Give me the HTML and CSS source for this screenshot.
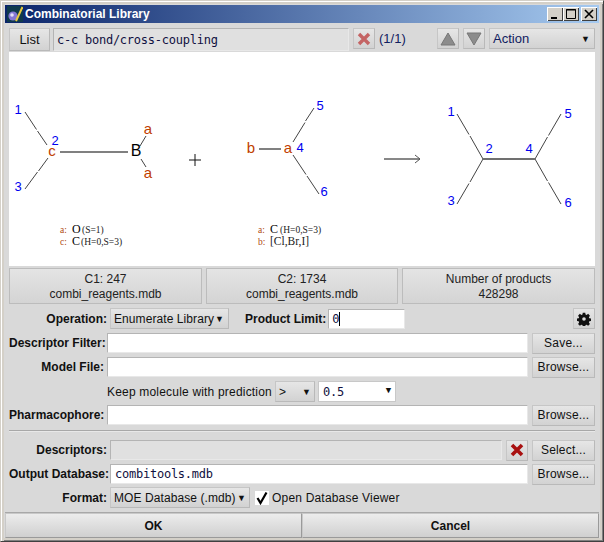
FILE: index.html
```html
<!DOCTYPE html>
<html lang="en">
<head>
<meta charset="utf-8">
<title>Combinatorial Library</title>
<link rel="stylesheet" href="styles.css">
</head>
<body>
<div class="window">
  <header class="titlebar">
    <svg class="app-icon" width="16" height="16" viewBox="0 0 16 16">
      <rect width="16" height="16" fill="#0f3a4c"/>
      <circle cx="6" cy="10" r="4.6" fill="#8577d2"/>
      <circle cx="5" cy="9" r="1.8" fill="#e4e0f8"/>
      <path d="M9 15 L15.5 1" stroke="#e8c840" stroke-width="2"/>
    </svg>
    <span class="title">Combinatorial Library</span>
    <div class="win-controls">
      <span class="win-btn"><svg width="16" height="14" viewBox="0 0 16 14"><rect x="4" y="10" width="6" height="2" fill="#000"/></svg></span>
      <span class="win-btn"><svg width="16" height="14" viewBox="0 0 16 14"><path d="M3.5 2.5h9v9h-9z M3 3h10" fill="none" stroke="#000"/></svg></span>
      <span class="win-btn close"><svg width="16" height="14" viewBox="0 0 16 14"><path d="M4 3l8 8M12 3l-8 8" stroke="#000" stroke-width="1.6"/></svg></span>
    </div>
  </header>

  <div class="content">
    <div class="toolbar">
      <button class="btn list-btn">List</button>
      <div class="field readonly mono grow">c-c bond/cross-coupling</div>
      <button class="btn icon-btn"><svg width="14" height="14" viewBox="0 0 14 14"><path d="M2 2l10 10M12 2L2 12" stroke="#c46464" stroke-width="3.4"/></svg></button>
      <span class="count">(1/1)</span>
      <button class="btn icon-btn up"><svg width="16" height="14" viewBox="0 0 16 14"><path d="M8 1l7 12H1z" fill="#8c8c8c" stroke="#777"/></svg></button>
      <button class="btn icon-btn"><svg width="16" height="14" viewBox="0 0 16 14"><path d="M8 13L1 1h14z" fill="#8c8c8c" stroke="#777"/></svg></button>
      <button class="btn action"><span>Action</span><span class="caret">▼</span></button>
    </div>

    <svg class="canvas" viewBox="0 0 586 214">
      <g transform="translate(-9 -52)">
        <g class="thin">
          <path d="M25 112L36.5 129.5M37.5 131L47 145M25 189L37.5 172M38.5 171L48 158"/>
          <path d="M146 136L140 146M141 159L146 167"/>
          <path d="M293 142L305 122.5M305.5 121L314 108M293 155L306 174.5M307 176L319 194"/>
          <path d="M457 114L469 134.5M470 136L483 159M457 204L469 183.5M470 182L483 159"/>
          <path d="M535 159L547.5 137M548.5 135.5L561 114M535 159L547.5 181M548.5 182.5L561 204"/>
        </g>
        <path class="thick" d="M60 152H128M259 149H281"/>
        <path class="product" d="M483 159H535"/>
        <path class="plain" d="M189 160H201M195 154V166M384 159H420"/>
        <path class="arrowhead" d="M415 155L420 159L415 163"/>
        <g class="blue">
          <text x="18" y="114">1</text><text x="55" y="145">2</text><text x="18" y="191">3</text>
          <text x="300" y="152">4</text><text x="320" y="110">5</text><text x="324" y="196">6</text>
          <text x="451" y="116">1</text><text x="489" y="153">2</text><text x="451" y="205">3</text>
          <text x="529" y="153">4</text><text x="568" y="118">5</text><text x="568" y="207">6</text>
        </g>
        <g class="atom">
          <text x="52" y="156">c</text><text x="148" y="134">a</text><text x="148" y="178">a</text>
          <text x="251" y="153">b</text><text x="288" y="153">a</text>
          <text class="boron" x="136" y="156">B</text>
        </g>
        <g class="legend">
          <text x="60" y="233"><tspan class="key">a:</tspan></text><text class="el" x="72" y="233">O</text><text x="82" y="233">(S=1)</text>
          <text x="60" y="245"><tspan class="key">c:</tspan></text><text class="el" x="72" y="245">C</text><text x="81" y="245">(H=0,S=3)</text>
          <text x="258" y="233"><tspan class="key">a:</tspan></text><text class="el" x="270" y="233">C</text><text x="280" y="233">(H=0,S=3)</text>
          <text x="258" y="245"><tspan class="key">b:</tspan></text><text class="big-set" x="270" y="245">[Cl,Br,I]</text>
        </g>
      </g>
    </svg>

    <div class="cards">
      <div class="card">C1: 247<br>combi_reagents.mdb</div>
      <div class="card">C2: 1734<br>combi_reagents.mdb</div>
      <div class="card">Number of products<br>428298</div>
    </div>

    <div class="row op-row">
      <label class="lab wide">Operation:</label>
      <button class="btn select"><span>Enumerate Library</span><span class="caret">▼</span></button>
      <label class="lab limit">Product Limit:</label>
      <div class="field white mono limit-field">0<span class="cursor"></span></div>
      <button class="btn gear"><svg width="14" height="14" viewBox="0 0 14 14"><path fill="#111" fill-rule="evenodd" d="M5.6 0h2.8l.3 2 1.2.5L11.6 1.3l2 2-1.2 1.7.5 1.2 2 .3v2.8l-2 .3-.5 1.2 1.2 1.7-2 2-1.7-1.2-1.2.5-.3 2H5.6l-.3-2-1.2-.5-1.7 1.2-2-2 1.2-1.7-.5-1.2-2-.3V6.5l2-.3.5-1.2L.4 3.3l2-2 1.7 1.2 1.2-.5zM7 5a2 2 0 1 0 0 4a2 2 0 0 0 0-4z" transform="translate(.7 .7) scale(.9)"/></svg></button>
    </div>

    <div class="row">
      <label class="lab">Descriptor Filter:</label>
      <div class="field white grow"></div>
      <button class="btn side">Save...</button>
    </div>
    <div class="row">
      <label class="lab">Model File:</label>
      <div class="field white grow"></div>
      <button class="btn side">Browse...</button>
    </div>
    <div class="keep-row">
      <span class="keep">Keep molecule with prediction</span>
      <button class="btn mini"><span>&gt;</span><span class="caret">▼</span></button>
      <div class="field white mono value"><span>0.5</span><span class="caret up-caret">▼</span></div>
    </div>
    <div class="row after-keep">
      <label class="lab">Pharmacophore:</label>
      <div class="field white grow"></div>
      <button class="btn side">Browse...</button>
    </div>

    <hr class="sep">

    <div class="row">
      <label class="lab wide">Descriptors:</label>
      <div class="field readonly grow"></div>
      <button class="btn icon-btn clear"><svg width="14" height="14" viewBox="0 0 14 14"><path d="M2 2l10 10M12 2L2 12" stroke="#a80f0f" stroke-width="3.6"/></svg></button>
      <button class="btn side">Select...</button>
    </div>
    <div class="row">
      <label class="lab wide">Output Database:</label>
      <div class="field white mono grow">combitools.mdb</div>
      <button class="btn side">Browse...</button>
    </div>
    <div class="format-row">
      <label class="lab wide">Format:</label>
      <button class="btn format"><span>MOE Database (.mdb)</span><span class="caret">▼</span></button>
      <span class="check"><svg width="14" height="14" viewBox="0 0 14 14"><path d="M2.5 7l3 5L11.5 1.5" fill="none" stroke="#000" stroke-width="2.2"/></svg></span>
      <span class="keep">Open Database Viewer</span>
    </div>
  </div>

  <footer class="actions">
    <button class="btn big ok">OK</button>
    <button class="btn big">Cancel</button>
  </footer>
</div>
</body>
</html>
```

FILE: styles.css
```css
* { box-sizing: border-box; }
html, body { margin: 0; padding: 0; background: #d4d0c8; }
body { width: 604px; height: 542px; overflow: hidden; font: 12px "Liberation Sans", Arial, sans-serif; color: #111; }

.window {
  width: 604px; height: 542px; display: flex; flex-direction: column;
  padding: 4px 4px 3px 4px;
  background: #d9d9d9;
  border: 1px solid;
  border-color: #d4d0c8 #404040 #404040 #d4d0c8;
  box-shadow: inset 1px 1px 0 #fff, inset 3px 3px 0 #d4d0c8, inset -1px -1px 0 #808080, inset -3px -3px 0 #d4d0c8;
}

.titlebar {
  height: 18px; flex: none; display: flex; align-items: center;
  background: linear-gradient(90deg, #0a246a, #a6caf0);
  color: #fff; font-weight: bold; font-size: 12px; padding-right: 2px;
}
.app-icon { margin: 0 2px; flex: none; }
.title { flex: 1; }
.win-controls { display: flex; gap: 0; }
.win-btn {
  width: 16px; height: 14px; margin-left: 0; background: #d4d0c8; display: block;
  box-shadow: inset 1px 1px 0 #fff, inset -1px -1px 0 #404040;
}
.win-btn.close { margin-left: 2px; }
.win-btn svg { display: block; }

.content { flex: 1; display: flex; flex-direction: column; padding: 5px 3px 0 4px; min-height: 0; background: #d9d9d9; }

.btn {
  font: inherit; color: #111; margin: 0; padding: 0; display: flex; align-items: center; justify-content: center;
  background: linear-gradient(#e6e6e6, #d2d2d2);
  border: 1px solid #b9b9b9; border-top-color: #c6c6c6; border-left-color: #c6c6c6; border-radius: 0;
}
.field { height: 20px; border: 1px solid #b4b4b4; border-bottom-color: #e8e8e8; border-right-color: #e8e8e8; display: flex; align-items: center; padding-left: 4px; }
.white { background: #fff; }
.readonly { background: #e0e0e0; }
.grow { flex: 1; min-width: 0; }
.mono { font: 12px "DejaVu Sans Mono", monospace; letter-spacing: -.24px; color: #101040; }
.caret { font-size: 9px; color: #111; }

.toolbar { height: 23px; width: 586px; flex: none; display: flex; align-items: stretch; }
.list-btn { width: 41px; margin-right: 3px; font-size: 13px; }
.toolbar .field { height: 23px; padding-left: 3px; margin-right: 4px; }
.icon-btn { width: 22px; height: 21px; }
.toolbar .icon-btn { height: 21px; }
.count { width: 62px; padding-left: 4px; line-height: 21px; color: #102060; font-size: 13px; }
.up { margin-right: 4px; }
.action { width: 106px; margin-left: 4px; height: 21px; justify-content: space-between; padding: 0 4px 0 3px; font-size: 13px; color: #102060; }

.canvas { display: block; width: 586px; height: 214px; background: #fff; flex: none; margin-top: 1px; }
.thin path { fill: none; stroke: #444; stroke-width: 1; }
.thick { fill: none; stroke: #808080; stroke-width: 2; }
.product { fill: none; stroke: #707070; stroke-width: 2; }
.plain { fill: none; stroke: #111; stroke-width: 1; }
.arrowhead { fill: none; stroke: #555; stroke-width: 1; }
.blue text { font: 13px "Liberation Sans", sans-serif; fill: #0000f0; text-anchor: middle; }
.atom text { font: 15px "Liberation Sans", sans-serif; fill: #c04000; text-anchor: middle; }
.atom .boron { fill: #000; font-size: 16px; }
.legend text { font: 9.5px "Liberation Serif", serif; fill: #222; }
.legend .el { font-size: 12px; fill: #000; }
.legend .big-set { font-size: 11.5px; }
.legend .key { fill: #b04a10; }

.cards { height: 36px; flex: none; margin-top: 2px; display: grid; grid-template-columns: 193px 192px 193px; gap: 4px; width: 586px; }
.card {
  background: linear-gradient(#e4e4e4, #d4d4d4); border: 1px solid #bcbcbc;
  text-align: center; line-height: 15px; padding-top: 3px; font-size: 12px; color: #222;
}

.row { display: flex; align-items: center; height: 20px; margin-top: 4px; flex: none; width: 586px; }
.lab { font-weight: bold; white-space: nowrap; text-align: right; width: 95px; margin-right: 3px; color: #111; }
.lab.wide { width: 98px; }
.side { width: 63px; height: 21px; margin-left: 4px; font-size: 12px; letter-spacing: .2px; }
.op-row { margin-top: 4px; height: 21px; }
.select { width: 119px; height: 21px; justify-content: space-between; padding: 0 4px 0 3px; letter-spacing: .08px; }
.limit { width: auto; margin: 0 2px 0 16px; }
.limit-field { width: 77px; height: 20px; padding-left: 3px; }
.cursor { display: inline-block; width: 1px; height: 14px; background: #000; margin-left: 0; }
.gear { width: 22px; height: 21px; margin-left: auto; }

.keep-row { display: flex; align-items: center; height: 21px; margin-top: 4px; flex: none; padding-left: 98px; }
.keep { white-space: nowrap; letter-spacing: .19px; }
.mini { width: 40px; height: 21px; margin-left: 3px; justify-content: space-between; padding: 0 3px; }
.value { width: 78px; height: 21px; margin-left: 3px; justify-content: space-between; padding: 0 4px; border-color: #c8c8c8; }
.up-caret { margin-top: -3px; }
.row.after-keep { margin-top: 3px; }

.sep { width: 586px; height: 0; margin: 5px 0 8px; border: 0; border-top: 1px solid #a8a8a8; border-bottom: 1px solid #e8e8e8; flex: none; }
.sep + .row { margin-top: 0; }
.clear { margin-left: 4px; }

.format-row { display: flex; align-items: center; height: 25px; flex: none; margin-top: 1px; }
.format { width: 140px; height: 21px; justify-content: space-between; padding: 0 3px; margin-right: 5px; letter-spacing: .08px; }
.check { width: 14px; height: 14px; background: #fff; margin-right: 3px; display: block; }
.check svg { display: block; }

.actions { height: 25px; flex: none; display: grid; grid-template-columns: 297px 297px; margin-top: 2px; }
.big { height: 25px; font-weight: bold; background: linear-gradient(#ececec, #d0d0d0); box-shadow: 0 -1px 0 #a8a8a8; border-color: #c8c8c8 #9a9a9a #9a9a9a #c8c8c8; }
```
